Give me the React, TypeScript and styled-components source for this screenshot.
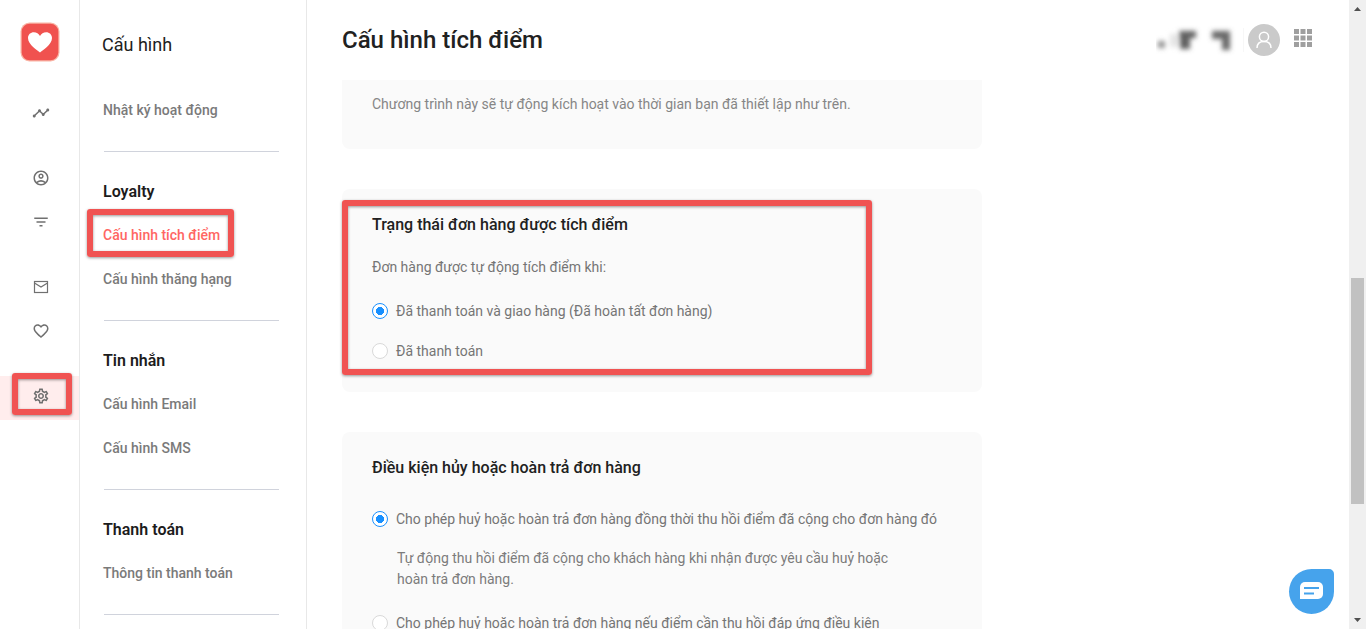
import React from "react";
import styled, { createGlobalStyle, css } from "styled-components";
import {
  MdTimeline,
  MdOutlineAccountCircle,
  MdFilterList,
  MdFavoriteBorder,
  MdOutlineSettings,
} from "react-icons/md";

const GlobalStyle = createGlobalStyle`
  * { box-sizing: border-box; }
  body {
    margin: 0;
    background: #fff;
    color: #212121;
    font-family: Roboto, "Noto Sans", sans-serif;
    font-size: 14px;
    line-height: 22px;
  }
  h1, h2, h3, p, ul, fieldset { margin: 0; padding: 0; border: 0; }
  ul { list-style: none; }
`;

const Shell = styled.div`
  position: relative;
  display: flex;
  height: 100vh;
  overflow: hidden;
`;

const Rail = styled.nav`
  flex: 0 0 80px;
  display: flex;
  flex-direction: column;
  padding-top: 22px;
  border-right: 1px solid #e8e8e8;
`;

const Logo = styled.a`
  display: block;
  width: 40px;
  height: 40px;
  margin: 0 auto 29px 20px;
`;

const RailGroup = styled.ul`
  margin-bottom: 21px;
`;

const RailItem = styled.li<{ $active?: boolean }>`
  position: relative;
  height: 44px;
  ${(p) =>
    p.$active &&
    css`
      margin-top: 2px;
      padding-bottom: 4px;
      background: #ffeded;
    `}
`;

const RailLink = styled.a`
  display: flex;
  align-items: center;
  justify-content: center;
  height: 100%;
  padding-left: 3px;
  color: #707070;
`;

const Highlight = styled.span<{ $inset: string }>`
  position: absolute;
  inset: ${(p) => p.$inset};
  border: 6px solid #f05352;
  border-radius: 3px;
  box-shadow: 0 1px 3px rgba(0, 0, 0, 0.4), inset 0 1px 3px rgba(0, 0, 0, 0.4);
  pointer-events: none;
`;

const Sidebar = styled.aside`
  flex: 0 0 227px;
  overflow: hidden;
  padding: 0 27px 0 22px;
  border-right: 1px solid #e8e8e8;
`;

const SidebarTitle = styled.h2`
  height: 88px;
  padding-top: 34px;
  font-size: 18px;
  font-weight: 400;
`;

const Divider = styled.hr`
  height: 1px;
  margin: 19px 0 17px 2px;
  border: 0;
  background: #d0d3dc;
`;

const MenuHeading = styled.h3`
  height: 44px;
  padding: 1px 0 0 1px;
  color: #1c1c1c;
  font-size: 16px;
  font-weight: 600;
  line-height: 44px;
`;

const MenuItem = styled.li`
  position: relative;
  height: 44px;
`;

const MenuLink = styled.a<{ $active?: boolean }>`
  display: block;
  padding-left: 1px;
  color: ${(p) => (p.$active ? "#ff6663" : "#7a7a7a")};
  font-weight: 500;
  line-height: 44px;
  text-decoration: none;
  white-space: nowrap;
`;

const Main = styled.main`
  flex: 1;
  min-width: 0;
  display: flex;
  flex-direction: column;
`;

const Header = styled.header`
  flex: 0 0 80px;
  display: flex;
  align-items: center;
  justify-content: space-between;
  padding: 0 37px 0 35px;
`;

const PageTitle = styled.h1`
  font-size: 24px;
  font-weight: 500;
  line-height: 32px;
`;

const Tools = styled.div`
  display: flex;
  align-items: center;
`;

const AccountName = styled.svg`
  width: 92px;
  height: 32px;
`;

const iconButton = css`
  display: block;
  padding: 0;
  border: 0;
  background: none;
  cursor: pointer;
`;

const Avatar = styled.button`
  ${iconButton}
  width: 32px;
  height: 32px;
  margin-right: 14px;
`;

const AppsButton = styled.button`
  ${iconButton}
  width: 18px;
  height: 18px;
  margin-bottom: 4px;
`;

const Content = styled.div`
  flex: 1;
  min-height: 0;
  overflow: hidden;
  display: flex;
  flex-direction: column;
  gap: 40px;
  padding: 0 35px;
`;

const Card = styled.section<{ $continued?: boolean }>`
  position: relative;
  flex: none;
  width: 100%;
  max-width: 640px;
  padding: ${(p) => (p.$continued ? "13px 30px 34px" : "24px 30px 30px")};
  border-radius: ${(p) => (p.$continued ? "0 0 8px 8px" : "8px")};
  background: #fafafa;
`;

const CardTitle = styled.h2`
  font-size: 16px;
  font-weight: 500;
  line-height: 24px;
`;

const Note = styled.p`
  color: #868686;
`;

const Options = styled.fieldset<{ $top: number }>`
  min-width: 0;
  padding-top: ${(p) => p.$top}px;
`;

const Legend = styled.legend`
  padding: 19px 0 0;
  color: #757575;
`;

const Option = styled.label`
  display: flex;
  align-items: center;
  gap: 8px;
  color: #757575;
  white-space: nowrap;

  & + & { margin-top: 18px; }
`;

const Radio = styled.input`
  appearance: none;
  flex: none;
  width: 16px;
  height: 16px;
  margin: 0;
  border: 1px solid #d9d9d9;
  border-radius: 50%;
  background: #fff;

  &:checked {
    border-color: #1890ff;
    background: radial-gradient(circle, #1890ff 0 4px, #fff 4px);
  }
`;

const OptionNote = styled.p`
  max-width: 525px;
  padding: 18px 0 22px 25px;
  color: #7c7c7c;
  line-height: 21px;
`;

const Scrollbar = styled.div`
  flex: 0 0 17px;
  display: flex;
  flex-direction: column;
  align-items: center;
  background: #f0f0f0;
`;

const ScrollArrow = styled.svg`
  flex: none;
  width: 17px;
  height: 17px;
  fill: #505050;
`;

const ScrollPart = styled.div<{ $share: number; $thumb?: boolean }>`
  flex: ${(p) => p.$share} 1 0;
  width: 13px;
  background: ${(p) => (p.$thumb ? "#c1c1c1" : "transparent")};
`;

const ChatButton = styled.button`
  ${iconButton}
  position: absolute;
  right: 32px;
  bottom: 15px;
  width: 45px;
  height: 45px;
  border-radius: 50% 5px 50% 50%;
  background: #46a3ec;
`;

function MailIcon({ size }: { size: number }) {
  return (
    <svg width={size} height={size} viewBox="0 0 18 18" fill="none" stroke="currentColor">
      <rect x="2.5" y="3.5" width="13" height="11" strokeWidth="1.2" />
      <path d="M2.500 5L9 9L15.500 5" strokeWidth="1.2" />
    </svg>
  );
}

type RailEntry = {
  label: string;
  Icon: React.ComponentType<{ size: number }>;
  active?: boolean;
};

const railGroups: RailEntry[][] = [
  [{ label: "Timeline", Icon: MdTimeline }],
  [
    { label: "Account", Icon: MdOutlineAccountCircle },
    { label: "Filter", Icon: MdFilterList },
  ],
  [
    { label: "Mail", Icon: MailIcon },
    { label: "Favorites", Icon: MdFavoriteBorder },
  ],
  [{ label: "Settings", Icon: MdOutlineSettings, active: true }],
];

const menuGroups: { heading?: string; items: { text: string; active?: boolean }[] }[] = [
  { items: [{ text: "Nhật ký hoạt động" }] },
  {
    heading: "Loyalty",
    items: [{ text: "Cấu hình tích điểm", active: true }, { text: "Cấu hình thăng hạng" }],
  },
  { heading: "Tin nhắn", items: [{ text: "Cấu hình Email" }, { text: "Cấu hình SMS" }] },
  { heading: "Thanh toán", items: [{ text: "Thông tin thanh toán" }] },
];

export default function App() {
  return (
    <>
      <GlobalStyle />
      <Shell>
        <Rail>
          <Logo href="#" aria-label="Home">
            <svg width="40" height="40" viewBox="0 0 40 40">
              <rect x="0.5" y="0.5" width="39" height="39" rx="9" fill="#f9b3a4" />
              <rect x="1.7" y="1.7" width="36.6" height="36.6" rx="8" fill="#f0524f" />
              <path
                d="M20 30.5C17.500 28.600 8 22.600 8 16C8 12.600 10.600 10.200 13.800 10.200C16.500 10.200 18.800 11.600 20 14C21.200 11.600 23.500 10.200 26.200 10.200C29.400 10.200 32 12.600 32 16C32 22.600 22.500 28.600 20 30.500Z"
                fill="#fff"
              />
            </svg>
          </Logo>
          {railGroups.map((group, i) => (
            <RailGroup key={i}>
              {group.map(({ label, Icon, active }) => (
                <RailItem key={label} $active={active}>
                  <RailLink href="#" aria-label={label}>
                    <Icon size={18} />
                  </RailLink>
                  {active && <Highlight $inset="-3px 7px 5px 12px" />}
                </RailItem>
              ))}
            </RailGroup>
          ))}
        </Rail>

        <Sidebar>
          <SidebarTitle>Cấu hình</SidebarTitle>
          {menuGroups.map((group, i) => (
            <React.Fragment key={i}>
              {group.heading && <MenuHeading>{group.heading}</MenuHeading>}
              <ul>
                {group.items.map((item) => (
                  <MenuItem key={item.text}>
                    <MenuLink href="#" $active={item.active}>
                      {item.text}
                    </MenuLink>
                    {item.active && <Highlight $inset="-4px 45px 0 -15px" />}
                  </MenuItem>
                ))}
              </ul>
              <Divider />
            </React.Fragment>
          ))}
        </Sidebar>

        <Main>
          <Header>
            <PageTitle>Cấu hình tích điểm</PageTitle>
            <Tools>
              <AccountName viewBox="0 0 92 32" aria-hidden="true">
                <defs>
                  <filter id="soft" x="-20%" y="-40%" width="140%" height="180%">
                    <feGaussianBlur stdDeviation="2.8" />
                  </filter>
                </defs>
                <g filter="url(#soft)">
                  <rect x="2" y="17" width="7" height="7" fill="#8f8f8f" />
                  <rect x="14" y="10" width="8" height="13" fill="#e4e4e4" />
                  <path d="M23 7H40V14H34V25H24Z" fill="#606060" />
                  <path d="M56 7H74V26H66V15H56Z" fill="#686868" />
                </g>
                <rect x="87" y="4" width="1" height="24" fill="#f7f7f7" />
              </AccountName>
              <Avatar aria-label="Profile">
                <svg width="32" height="32" viewBox="0 0 32 32">
                  <circle cx="16" cy="16" r="16" fill="#cacaca" />
                  <g fill="none" stroke="#fff" strokeWidth="1.5">
                    <circle cx="16" cy="12.800" r="4.600" />
                    <path d="M9 24C9 19.500 12 17.400 16 17.400S23 19.500 23 24" />
                  </g>
                </svg>
              </Avatar>
              <AppsButton aria-label="Apps">
                <svg width="18" height="18" viewBox="0 0 18 18" fill="#9f9f9f">
                  {[0, 1, 2].map((row) =>
                    [0, 1, 2].map((col) => (
                      <rect key={`${row}${col}`} x={col * 6.5} y={row * 6.5} width="5" height="5" />
                    ))
                  )}
                </svg>
              </AppsButton>
            </Tools>
          </Header>

          <Content>
            <Card $continued>
              <Note>Chương trình này sẽ tự động kích hoạt vào thời gian bạn đã thiết lập như trên.</Note>
            </Card>

            <Card>
              <CardTitle>Trạng thái đơn hàng được tích điểm</CardTitle>
              <Options $top={22}>
                <Legend>Đơn hàng được tự động tích điểm khi:</Legend>
                <Option>
                  <Radio type="radio" name="status" defaultChecked />
                  Đã thanh toán và giao hàng (Đã hoàn tất đơn hàng)
                </Option>
                <Option>
                  <Radio type="radio" name="status" />
                  Đã thanh toán
                </Option>
              </Options>
              <Highlight $inset="11px 110px 17px 0" />
            </Card>

            <Card>
              <CardTitle>Điều kiện hủy hoặc hoàn trả đơn hàng</CardTitle>
              <Options $top={28}>
                <Option>
                  <Radio type="radio" name="refund" defaultChecked />
                  Cho phép huỷ hoặc hoàn trả đơn hàng đồng thời thu hồi điểm đã cộng cho đơn hàng đó
                </Option>
                <OptionNote>
                  Tự động thu hồi điểm đã cộng cho khách hàng khi nhận được yêu cầu huỷ hoặc hoàn trả đơn hàng.
                </OptionNote>
                <Option>
                  <Radio type="radio" name="refund" />
                  Cho phép huỷ hoặc hoàn trả đơn hàng nếu điểm cần thu hồi đáp ứng điều kiện
                </Option>
              </Options>
            </Card>
          </Content>
        </Main>

        <Scrollbar aria-hidden="true">
          <ScrollArrow viewBox="0 0 17 17">
            <path d="M8.500 7L12 11H5Z" />
          </ScrollArrow>
          <ScrollPart $share={261} />
          <ScrollPart $share={226} $thumb />
          <ScrollPart $share={108} />
          <ScrollArrow viewBox="0 0 17 17">
            <path d="M5 6H12L8.500 10Z" />
          </ScrollArrow>
        </Scrollbar>

        <ChatButton aria-label="Chat">
          <svg width="45" height="45" viewBox="0 0 45 45">
            <rect x="11" y="13" width="23" height="17" rx="5" fill="#fff" />
            <path d="M11 20V30H20Z" fill="#fff" />
            <path d="M15 19H30M15 24.500H25" stroke="#46a3ec" strokeWidth="2" />
          </svg>
        </ChatButton>
      </Shell>
    </>
  );
}
